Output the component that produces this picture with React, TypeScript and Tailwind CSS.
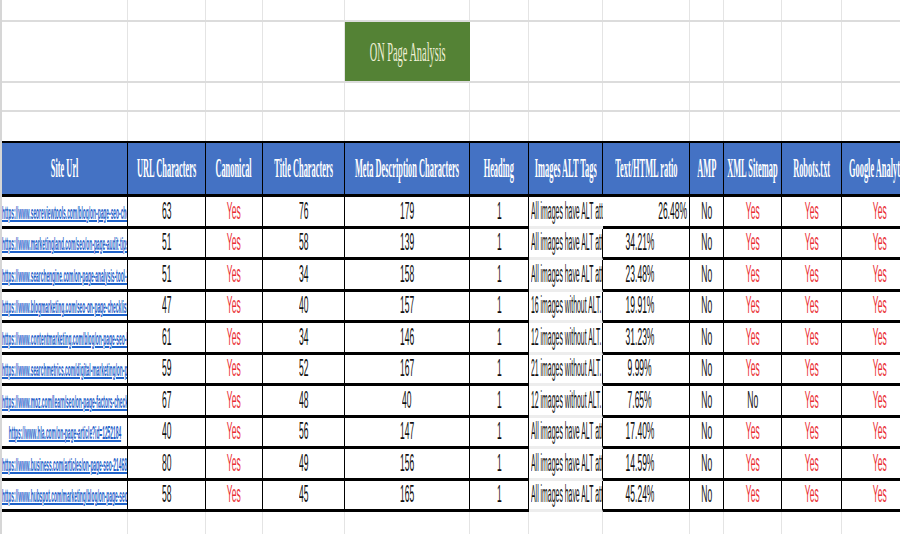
import clsx from "clsx";

// column widths copied from the sheet (first one loses 2px to the left edge line)
const GRID =
  "grid grid-cols-[126px_78px_57px_82px_125px_59px_74px_87px_34px_58px_60px_76px]";

const HEADERS = [
  "Site Url",
  "URL Characters",
  "Canonical",
  "Title Characters",
  "Meta Description Characters",
  "Heading",
  "Images ALT Tags",
  "Text/HTML ratio",
  "AMP",
  "XML Sitemap",
  "Robots.txt",
  "Google Analytics",
];

type Row = {
  url: string;
  urlChars: number;
  title: number;
  meta: number;
  alt: string;
  ratio: string;
  xml: "Yes" | "No";
};

const ROWS: Row[] = [
  { url: "https://www.seoreviewtools.com/blog/on-page-seo-checklist-for-beginners", urlChars: 63, title: 76, meta: 179, alt: "All images have ALT attributes", ratio: "26.48%", xml: "Yes" },
  { url: "https://www.marketingland.com/seo/on-page-audit-tips", urlChars: 51, title: 58, meta: 139, alt: "All images have ALT attributes", ratio: "34.21%", xml: "Yes" },
  { url: "https://www.searchengine.com/on-page-analysis-tool-2018-guide", urlChars: 51, title: 34, meta: 158, alt: "All images have ALT attributes", ratio: "23.48%", xml: "Yes" },
  { url: "https://www.blogmarketing.com/seo-on-page-checklist-guide", urlChars: 47, title: 40, meta: 157, alt: "16 images without ALT.", ratio: "19.91%", xml: "Yes" },
  { url: "https://www.contentmarketing.com/blog/on-page-seo-basics", urlChars: 61, title: 34, meta: 146, alt: "12 images without ALT.", ratio: "31.23%", xml: "Yes" },
  { url: "https://www.searchmetrics.com/digital-marketing/on-page-factors", urlChars: 59, title: 52, meta: 167, alt: "21 images without ALT.", ratio: "9.99%", xml: "Yes" },
  { url: "https://www.moz.com/learn/seo/on-page-factors-checklist-2018", urlChars: 67, title: 48, meta: 40, alt: "12 images without ALT.", ratio: "7.65%", xml: "No" },
  { url: "https://www.hla.com/on-page-article?id=1252184", urlChars: 40, title: 56, meta: 147, alt: "All images have ALT attributes", ratio: "17.40%", xml: "Yes" },
  { url: "https://www.business.com/articles/on-page-seo-21468758-checklist", urlChars: 80, title: 49, meta: 156, alt: "All images have ALT attributes", ratio: "14.59%", xml: "Yes" },
  { url: "https://www.hubspot.com/marketing/blog/on-page-seo-template", urlChars: 58, title: 45, meta: 165, alt: "All images have ALT attributes", ratio: "45.24%", xml: "Yes" },
];

function BlankRow({ h }: { h: string }) {
  return (
    <div className={clsx(GRID, h, "border-b-2 border-[#dcdcdc]")}>
      {HEADERS.map((_, i) => (
        <div key={i} className="border-r border-[#e4e4e4]" />
      ))}
    </div>
  );
}

function Num({ v, red }: { v: string | number; red?: boolean }) {
  return (
    <span
      className={clsx(
        "inline-block scale-x-[0.37] whitespace-nowrap text-[23px] leading-none",
        red ? "text-[#ea2f35]" : "text-[#111]"
      )}
    >
      {v}
    </span>
  );
}

const cell = "flex items-center justify-center overflow-hidden border-r border-b-[3px] border-black";

export default function App() {
  return (
    <div className="h-[534px] w-[900px] overflow-hidden bg-white font-['Liberation_Sans',sans-serif]">
      <div className="w-[918px] border-l-2 border-[#d6d6d6]">
        <BlankRow h="h-[22px]" />

        {/* title row */}
        <div className={clsx(GRID, "h-[61px] border-b-2 border-[#dcdcdc]")}>
          {HEADERS.map((_, i) =>
            i === 4 ? (
              <div key={i} className="flex items-center justify-center bg-[#548235]">
                <span className="inline-block scale-x-[0.37] whitespace-nowrap font-['Liberation_Serif',serif] text-[28px] leading-none text-[#eeefd6]">
                  ON Page Analysis
                </span>
              </div>
            ) : (
              <div key={i} className="border-r border-[#e4e4e4]" />
            )
          )}
        </div>

        <BlankRow h="h-[29px]" />
        <BlankRow h="h-[31px]" />

        {/* header */}
        <div className={clsx(GRID, "-mt-[2px] h-[56px] border-t-2 border-b-[3px] border-black bg-[#4472c4]")}>
          {HEADERS.map((t) => (
            <div key={t} className="flex items-center justify-center overflow-hidden border-r border-black">
              <span className="inline-block scale-x-[0.31] whitespace-nowrap font-['Liberation_Serif',serif] text-[27px] font-bold leading-none text-white">
                {t}
              </span>
            </div>
          ))}
        </div>

        {/* data rows */}
        {ROWS.map((r, i) => (
          <div key={i} className={clsx(GRID, "h-[31.5px]")}>
            <div className={clsx(cell, i === 7 ? "justify-center" : "justify-start")}>
              <span
                className={clsx(
                  "inline-block scale-x-[0.27] whitespace-nowrap pt-[3px] text-[18px] font-bold leading-none text-[#1f62c9] underline decoration-2",
                  i === 7 ? "origin-center" : "origin-left"
                )}
              >
                {r.url}
              </span>
            </div>
            <div className={cell}>
              <Num v={r.urlChars} />
            </div>
            <div className={cell}>
              <Num v="Yes" red />
            </div>
            <div className={cell}>
              <Num v={r.title} />
            </div>
            <div className={cell}>
              <Num v={r.meta} />
            </div>
            <div className={cell}>
              <Num v={1} />
            </div>
            <div
              className={clsx(
                "flex items-center justify-start overflow-hidden border-b-[3px] border-b-[#ededed] pl-[2px]",
                i === 0 ? "" : "border-r border-r-black"
              )}
            >
              <span className="inline-block origin-left scale-x-[0.3] whitespace-nowrap text-[23px] leading-none text-[#111]">
                {r.alt}
              </span>
            </div>
            <div className={clsx(cell, i === 0 && "justify-end pr-[2px]")}>
              <span
                className={clsx(
                  "inline-block scale-x-[0.37] whitespace-nowrap text-[23px] leading-none text-[#111]",
                  i === 0 ? "origin-right" : "-ml-[12px]"
                )}
              >
                {r.ratio}
              </span>
            </div>
            <div className={cell}>
              <Num v="No" />
            </div>
            <div className={cell}>
              <Num v={r.xml} red={r.xml === "Yes"} />
            </div>
            <div className={cell}>
              <Num v="Yes" red />
            </div>
            <div className={cell}>
              <Num v="Yes" red />
            </div>
          </div>
        ))}

        <BlankRow h="h-[30px]" />
      </div>
    </div>
  );
}
